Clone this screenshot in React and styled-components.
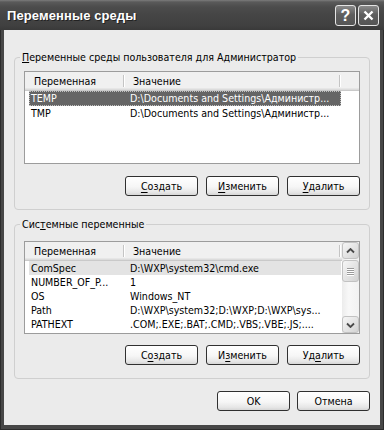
import React from 'react'
import styled, { createGlobalStyle } from 'styled-components'

const GlobalStyle = createGlobalStyle`
  html, body { margin: 0; padding: 0; background: #ffffff; }
  * { box-sizing: border-box; }
`

const Window = styled.div`
  width: 384px;
  height: 430px;
  display: flex;
  flex-direction: column;
  background: #474747;
  border: 1px solid #2c2c2c;
  border-top: 0;
  font-family: "DejaVu Sans Condensed", "Liberation Sans", sans-serif;
  font-size: 10.6px;
  color: #000;
`
const TitleBar = styled.div`
  height: 30px;
  margin: 0 -1px;
  flex-shrink: 0;
  display: flex;
  align-items: center;
  justify-content: space-between;
  padding: 0 5px 0 7px;
  background: linear-gradient(#7c7c7c 0, #5a5a5a 2px, #4c4c4c 7px, #454545 50%, #404040 85%, #393939 100%);
`
const Title = styled.span`
  font-family: "Liberation Sans", sans-serif;
  font-weight: bold;
  font-size: 13px;
  letter-spacing: 0.1px;
  color: #fff;
  text-shadow: 1px 1px 0 #222;
  margin-top: 1px;
`
const TitleButtons = styled.div`
  display: flex;
  gap: 2px;
  margin-top: 1px;
`
const CaptionBtn = styled.div`
  width: 21px;
  height: 21px;
  border: 1px solid #e4e4e4;
  border-radius: 3px;
  background: linear-gradient(#8a8a8a, #5e5e5e 45%, #555 100%);
  display: flex;
  align-items: center;
  justify-content: center;
  color: #fff;
  font-family: "Liberation Sans", sans-serif;
  font-weight: bold;
  font-size: 16px;
`
const Client = styled.div`
  flex: 1;
  margin: 0 3px 4px;
  background: #ebebeb;
  display: flex;
  flex-direction: column;
  padding: 0 10px;
`
const Group = styled.fieldset`
  margin: ${p => p.$top}px 0 0;
  padding: ${p => p.$padTop}px 9px 13px 9px;
  border: 1px solid #cfcfcf;
  border-radius: 4px;
  min-width: 0;
`
const Legend = styled.legend`
  margin-left: -4px;
  padding: 0 2px;
  line-height: 14px;
  color: #000;
`
const ListView = styled.div`
  height: 93px;
  border: 1px solid #9c9c9c;
  background: #fff;
  display: flex;
`
const ListMain = styled.div`
  flex: 1;
  min-width: 0;
  overflow: hidden;
`
const Header = styled.div`
  height: 19px;
  display: flex;
  align-items: center;
  background: #f0f0f0;
  box-shadow: inset 0 -1px 0 #c9c9c9, inset 0 -2px 0 #dcdcdc, inset 0 -3px 0 #e6e6e6;
`
const HeaderCell = styled.div`
  position: relative;
  width: ${p => p.$w}px;
  height: 100%;
  line-height: 18px;
  padding-left: 9px;
  flex-shrink: 0;
  &::after {
    content: '';
    position: absolute;
    right: 0;
    top: 3px;
    bottom: 4px;
    width: 1px;
    background: #c4c4c4;
    box-shadow: 1px 0 0 #fff;
  }
`
const Row = styled.div`
  height: ${p => p.$h}px;
  width: 312px;
  margin-left: 4px;
  display: flex;
  align-items: stretch;
  white-space: nowrap;
  background: ${p => (p.$state === 'focus' ? '#656565' : p.$state === 'dim' ? '#e3e3e3' : 'transparent')};
  color: ${p => (p.$state === 'focus' ? '#fff' : '#000')};
  outline: ${p => (p.$state === 'focus' ? '1px dotted #c0c0c0' : 'none')};
  outline-offset: -1px;
`
const Cell = styled.span`
  width: ${p => p.$w}px;
  line-height: ${p => p.$h}px;
  padding-left: 2px;
  overflow: hidden;
  flex-shrink: 0;
`
const ScrollBar = styled.div`
  width: 17px;
  flex-shrink: 0;
  display: flex;
  flex-direction: column;
  background: linear-gradient(to right, #ececec, #f8f8f8 40%, #f2f2f2);
`
const ScrollBtn = styled.div`
  width: 17px;
  height: 17px;
  border: 1px solid #c2c2c2;
  border-radius: 3px;
  background: linear-gradient(to bottom right, #f6f6f6, #dedede 70%, #d2d2d2);
  display: flex;
  align-items: center;
  justify-content: center;
  margin-top: ${p => (p.$push ? 'auto' : '0')};
`
const Thumb = styled(ScrollBtn)`
  height: 22px;
  margin-top: 1px;
  flex-direction: column;
  gap: 1px;
  & > i {
    display: block;
    width: 7px;
    height: 1px;
    background: #9a9a9a;
    box-shadow: 0 1px 0 #fff;
  }
`
const ButtonRow = styled.div`
  display: flex;
  justify-content: flex-end;
  gap: ${p => p.$gap}px;
  margin-top: ${p => p.$top}px;
`
const Button = styled.button`
  width: 73px;
  height: 20px;
  padding: 0;
  border: 1px solid #303030;
  border-radius: 3px;
  background: linear-gradient(#ffffff, #f6f6f6 55%, #e6e6e6 85%, #d6d6d6);
  font: inherit;
  color: #000;
  line-height: 16px;
  & u { text-decoration-thickness: 1px; text-underline-offset: 2px; }
`

const Mnemonic = ({ text, at }) =>
  at === undefined ? (
    text
  ) : (
    <>
      {text.slice(0, at)}
      <u>{text[at]}</u>
      {text.slice(at + 1)}
    </>
  )

const Chevron = ({ down }) => (
  <svg width="9" height="6" viewBox="0 0 9 6">
    <path
      d={down ? 'M1 1.5 L4.5 5 L8 1.5' : 'M1 4.5 L4.5 1 L8 4.5'}
      fill="none"
      stroke="#4a4a4a"
      strokeWidth="1.8"
    />
  </svg>
)

const userVars = [
  ['TEMP', 'D:\\Documents and Settings\\Администр...'],
  ['TMP', 'D:\\Documents and Settings\\Администр...'],
]
const systemVars = [
  ['ComSpec', 'D:\\WXP\\system32\\cmd.exe'],
  ['NUMBER_OF_P...', '1'],
  ['OS', 'Windows_NT'],
  ['Path', 'D:\\WXP\\system32;D:\\WXP;D:\\WXP\\sys...'],
  ['PATHEXT', '.COM;.EXE;.BAT;.CMD;.VBS;.VBE;.JS;....'],
]

const VarList = ({ rows, rowHeight, selected, focused, scroll }) => (
  <ListView>
    <ListMain>
      <Header>
        <HeaderCell $w={99}>Переменная</HeaderCell>
        <HeaderCell $w={216}>Значение</HeaderCell>
      </Header>
      {rows.map(([name, value], i) => (
        <Row key={name} $h={rowHeight} $state={i === selected ? (focused ? 'focus' : 'dim') : ''}>
          <Cell $w={99} $h={rowHeight}>{name}</Cell>
          <Cell $w={213} $h={rowHeight}>{value}</Cell>
        </Row>
      ))}
    </ListMain>
    {scroll && (
      <ScrollBar>
        <ScrollBtn><Chevron /></ScrollBtn>
        <Thumb><i /><i /><i /><i /></Thumb>
        <ScrollBtn $push><Chevron down /></ScrollBtn>
      </ScrollBar>
    )}
  </ListView>
)

const GroupButtons = ({ keys, top }) => (
  <ButtonRow $gap={8} $top={top}>
    <Button><Mnemonic text="Создать" at={keys[0]} /></Button>
    <Button><Mnemonic text="Изменить" at={keys[1]} /></Button>
    <Button><Mnemonic text="Удалить" at={keys[2]} /></Button>
  </ButtonRow>
)

export default function App() {
  return (
    <>
      <GlobalStyle />
      <Window>
        <TitleBar>
          <Title>Переменные среды</Title>
          <TitleButtons>
            <CaptionBtn>?</CaptionBtn>
            <CaptionBtn>
              <svg width="11" height="11" viewBox="0 0 11 11">
                <path d="M1.5 1.5 L9.5 9.5 M9.5 1.5 L1.5 9.5" stroke="#fff" strokeWidth="2.4" />
              </svg>
            </CaptionBtn>
          </TitleButtons>
        </TitleBar>
        <Client>
          <Group $top={20} $padTop={7}>
            <Legend><Mnemonic text="Переменные среды пользователя для Администратор" at={0} /></Legend>
            <VarList rows={userVars} rowHeight={15} selected={0} focused />
            <GroupButtons keys={[0, 0, 0]} top={12} />
          </Group>
          <Group $top={7} $padTop={10}>
            <Legend><Mnemonic text="Системные переменные" at={3} /></Legend>
            <VarList rows={systemVars} rowHeight={14} selected={0} scroll />
            <GroupButtons keys={[1, 1, 2]} top={11} />
          </Group>
          <ButtonRow $gap={7} $top={12}>
            <Button>OK</Button>
            <Button>Отмена</Button>
          </ButtonRow>
        </Client>
      </Window>
    </>
  )
}
